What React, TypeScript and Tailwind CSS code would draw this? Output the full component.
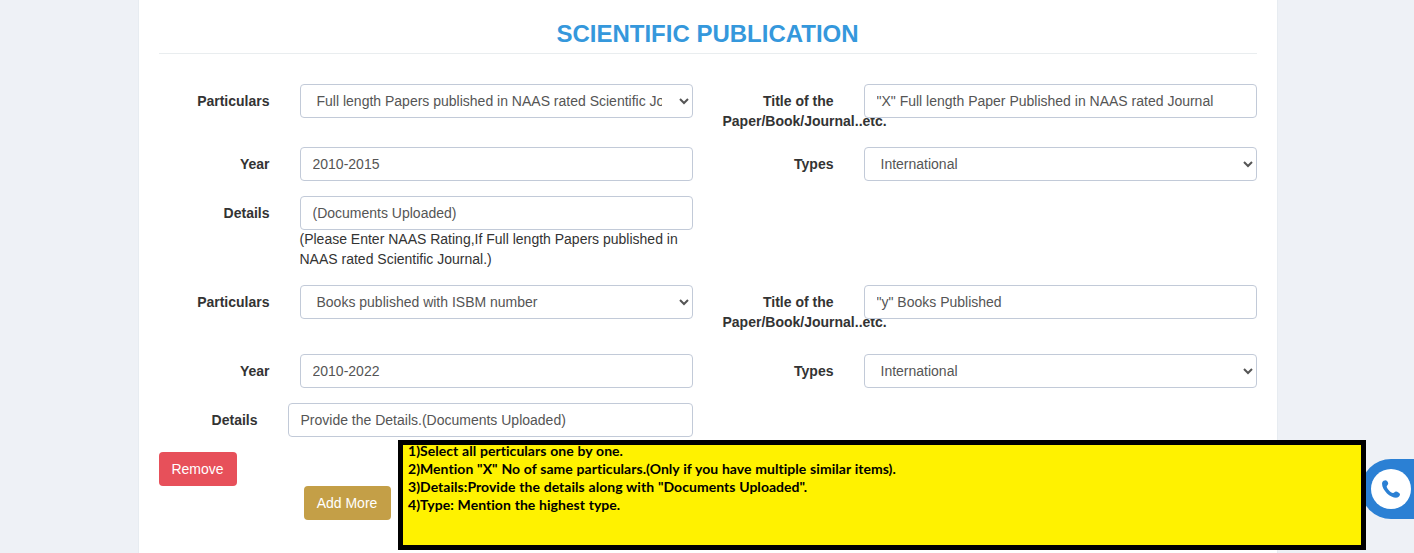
import type { ReactNode } from "react";

const control =
  "block h-[34px] w-full rounded-[4px] border border-[#c2cad8] bg-white py-1.5 pl-3 text-[14px] leading-5 text-[#555555] outline-none";

function Field({ label, children, wide = false }: { label: string; children: ReactNode; wide?: boolean }) {
  return (
    <div className="flex items-start">
      <label className={`${wide ? "w-[99px]" : "w-[111px]"} mr-[30px] shrink-0 pt-[7px] text-right font-bold leading-5`}>
        {label}
      </label>
      <div className="relative min-w-0 flex-1">{children}</div>
    </div>
  );
}

function Text({ value }: { value: string }) {
  return <input type="text" defaultValue={value} className={`${control} pr-3`} />;
}

function Choice({ value }: { value: string }) {
  return (
    <select className={`${control} pr-[14px]`}>
      <option>{value}</option>
    </select>
  );
}

const row = "grid grid-cols-2 gap-x-[30px]";

export default function App() {
  return (
    <div className="relative h-[553px] overflow-hidden bg-[#eef1f6] font-['Liberation_Sans',Arial,sans-serif] text-[14px] text-[#333333]">
      <main className="ml-[137.5px] h-full w-[1140px] border-x border-[#e7ecf1] bg-white px-5">
        <h2 className="h-[54px] border-b border-[#e9edef] pt-[18px] text-center text-[24px] font-bold leading-[31px] text-[#3598dc]">
          SCIENTIFIC PUBLICATION
        </h2>

        <form className="flex flex-col pt-[30px]">
          <div className={`${row} h-[63px]`}>
            <Field label="Particulars">
              <Choice value="Full length Papers published in NAAS rated Scientific Journal" />
            </Field>
            <Field label="Title of the Paper/Book/Journal..etc.">
              <Text value={'"X" Full length Paper Published in NAAS rated Journal'} />
            </Field>
          </div>
          <div className={`${row} h-[49px]`}>
            <Field label="Year">
              <Text value="2010-2015" />
            </Field>
            <Field label="Types">
              <Choice value="International" />
            </Field>
          </div>
          <div className={`${row} h-[89px]`}>
            <Field label="Details">
              <Text value="(Documents Uploaded)" />
              <p className="-mt-px leading-5">
                (Please Enter NAAS Rating,If Full length Papers published in NAAS rated Scientific Journal.)
              </p>
            </Field>
          </div>
          <div className={`${row} h-[69px]`}>
            <Field label="Particulars">
              <Choice value="Books published with ISBM number" />
            </Field>
            <Field label="Title of the Paper/Book/Journal..etc.">
              <Text value={'"y" Books Published'} />
            </Field>
          </div>
          <div className={`${row} h-[49px]`}>
            <Field label="Year">
              <Text value="2010-2022" />
            </Field>
            <Field label="Types">
              <Choice value="International" />
            </Field>
          </div>
          <div className={`${row} h-[49px]`}>
            <Field label="Details" wide>
              <Text value="Provide the Details.(Documents Uploaded)" />
            </Field>
          </div>
          <div className="flex">
            <button type="button" className="h-[34px] w-[78px] rounded-[4px] bg-[#e7505a] text-white">
              Remove
            </button>
          </div>
          <div className="flex pl-[145px]">
            <button type="button" className="h-[34px] w-[87px] rounded-[4px] bg-[#c49f47] text-white">
              Add More
            </button>
          </div>
        </form>
      </main>

      <aside className="absolute top-[459px] right-0 flex h-[60px] w-[53px] items-center rounded-l-[30px] bg-[#2b80d4] pl-[10px]">
        <span className="flex h-10 w-10 shrink-0 items-center justify-center rounded-full bg-white">
          <svg width="18" height="18" viewBox="0 0 18 18" fill="#2b80d4">
            <path d="M.2 2.5C.7 1 2.2.2 3.7.2C5.2.3 6.3 2.4 6.2 3.7C6 5 4.6 5.5 4.7 6.7C5 8.8 8.6 12.6 11 13C12.2 13.1 12.7 11.5 14 11.5C15.4 11.6 17.7 13 18 14.2C18 15.7 16.8 17.1 15.4 17.6C12.7 18.3 8 16.3 5 13.4C1.7 10.3-.6 5.6.2 2.5Z" />
          </svg>
        </span>
      </aside>

      <section className="absolute top-[440px] left-[398px] h-[110px] w-[968px] border-[5px] border-black bg-[#fff200] pl-[5px] font-[Lato,sans-serif] text-[14px] font-bold leading-[18px] tracking-[0.04px] text-black [font-variant-ligatures:none] [word-spacing:0.3px]">
        <div className="-mt-[3px] whitespace-nowrap">
          <p>1)Select all perticulars one by one.</p>
          <p>2)Mention "X" No of same particulars.(Only if you have multiple similar items).</p>
          <p>3)Details:Provide the details along with "Documents Uploaded".</p>
          <p>4)Type: Mention the highest type.</p>
        </div>
      </section>
    </div>
  );
}
